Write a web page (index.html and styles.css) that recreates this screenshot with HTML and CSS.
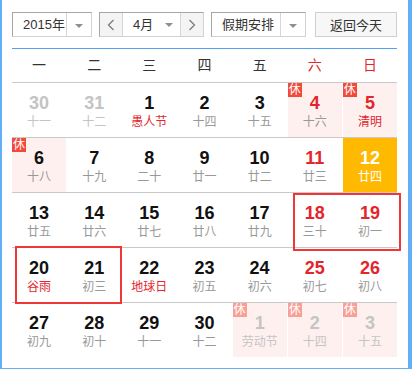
FILE: index.html
```html
<!DOCTYPE html>
<html lang="zh-CN">
<head>
  <meta charset="UTF-8">
  <meta name="viewport" content="width=device-width, initial-scale=1.0">
  <title>万年历</title>
  <link rel="stylesheet" href="styles.css">
</head>
<body>
  <div class="calendar">
    <div class="toolbar">
      <div class="select year">
        <span class="select-text">2015年</span>
        <span class="select-arrow"><i class="caret"></i></span>
      </div>
      <div class="select month">
        <span class="step"><svg width="8" height="12" viewBox="0 0 8 12"><polyline points="6.5,1 1.5,6 6.5,11" fill="none" stroke="#777" stroke-width="1.2"/></svg></span>
        <span class="select-text">4月<i class="caret"></i></span>
        <span class="step"><svg width="8" height="12" viewBox="0 0 8 12"><polyline points="1.5,1 6.5,6 1.5,11" fill="none" stroke="#777" stroke-width="1.2"/></svg></span>
      </div>
      <div class="select holiday">
        <span class="select-text">假期安排</span>
        <span class="select-arrow"><i class="caret"></i></span>
      </div>
      <button class="today-btn">返回今天</button>
    </div>

    <div class="weekdays">
      <span>一</span><span>二</span><span>三</span><span>四</span><span>五</span>
      <span class="red">六</span><span class="red">日</span>
    </div>

    <div class="week">
      <div class="day other"><b>30</b><em>十一</em></div>
      <div class="day other"><b>31</b><em>十二</em></div>
      <div class="day"><b>1</b><em class="fest">愚人节</em></div>
      <div class="day"><b>2</b><em>十四</em></div>
      <div class="day"><b>3</b><em>十五</em></div>
      <div class="day rest weekend"><i class="tag">休</i><b>4</b><em>十六</em></div>
      <div class="day rest weekend"><i class="tag">休</i><b>5</b><em class="fest">清明</em></div>
    </div>
    <div class="week">
      <div class="day rest"><i class="tag">休</i><b>6</b><em>十八</em></div>
      <div class="day"><b>7</b><em>十九</em></div>
      <div class="day"><b>8</b><em>二十</em></div>
      <div class="day"><b>9</b><em>廿一</em></div>
      <div class="day"><b>10</b><em>廿二</em></div>
      <div class="day weekend"><b>11</b><em>廿三</em></div>
      <div class="day today"><b>12</b><em>廿四</em></div>
    </div>
    <div class="week">
      <div class="day"><b>13</b><em>廿五</em></div>
      <div class="day"><b>14</b><em>廿六</em></div>
      <div class="day"><b>15</b><em>廿七</em></div>
      <div class="day"><b>16</b><em>廿八</em></div>
      <div class="day"><b>17</b><em>廿九</em></div>
      <div class="day weekend"><b>18</b><em>三十</em></div>
      <div class="day weekend"><b>19</b><em>初一</em></div>
    </div>
    <div class="week">
      <div class="day"><b>20</b><em class="fest">谷雨</em></div>
      <div class="day"><b>21</b><em>初三</em></div>
      <div class="day"><b>22</b><em class="fest">地球日</em></div>
      <div class="day"><b>23</b><em>初五</em></div>
      <div class="day"><b>24</b><em>初六</em></div>
      <div class="day weekend"><b>25</b><em>初七</em></div>
      <div class="day weekend"><b>26</b><em>初八</em></div>
    </div>
    <div class="week">
      <div class="day"><b>27</b><em>初九</em></div>
      <div class="day"><b>28</b><em>初十</em></div>
      <div class="day"><b>29</b><em>十一</em></div>
      <div class="day"><b>30</b><em>十二</em></div>
      <div class="day rest other"><i class="tag">休</i><b>1</b><em>劳动节</em></div>
      <div class="day rest other"><i class="tag">休</i><b>2</b><em>十四</em></div>
      <div class="day rest other"><i class="tag">休</i><b>3</b><em>十五</em></div>
    </div>

    <div class="pick pick-a"></div>
    <div class="pick pick-b"></div>
  </div>
</body>
</html>
```

FILE: styles.css
```css
body {
  margin: 0;
  font-family: "Liberation Sans", "Noto Sans CJK SC", sans-serif;
  color: #333;
}
.calendar {
  position: relative;
  box-sizing: border-box;
  width: 412px;
  height: 369px;
  padding: 12px 11px 0 10px;
  border-left: 2px solid #62aef7;
  border-right: 4px solid #62aef7;
  border-bottom: 1px solid #62aef7;
  background: #fff;
}
.toolbar {
  display: flex;
  gap: 7px;
  height: 25px;
  padding-bottom: 11px;
  border-bottom: 1px solid #4fa3f1;
}
.select {
  display: flex;
  box-sizing: border-box;
  height: 25px;
  border: 1px solid;
  border-color: #a6a6a6 #d2d2d2 #d2d2d2 #a6a6a6;
  font-size: 13px;
  line-height: 23px;
  background: #fff;
}
.select-text {
  position: relative;
  flex: 1;
  padding-left: 10px;
}
.select-arrow {
  width: 24px;
  border-left: 1px solid #d6d6d6;
  text-align: center;
}
.caret {
  display: inline-block;
  width: 0;
  height: 0;
  vertical-align: middle;
  border-left: 4px solid transparent;
  border-right: 4px solid transparent;
  border-top: 4px solid #8f8f8f;
}
.year { width: 80px; }
.holiday { width: 95px; }
.month { width: 105px; }
.month .select-text .caret {
  position: absolute;
  right: 7px;
  top: 10px;
}
.step {
  display: flex;
  align-items: center;
  justify-content: center;
  width: 22px;
  background: #f4f4f4;
}
.step:first-child { border-right: 1px solid #d6d6d6; }
.step:last-child { border-left: 1px solid #d6d6d6; }
.today-btn {
  margin-left: auto;
  width: 82px;
  height: 25px;
  padding: 0;
  border: 1px solid #cfcfcf;
  background: #f7f7f7;
  color: #333;
  font-family: "Liberation Sans", "Noto Sans CJK SC", sans-serif;
  font-size: 13px;
}
.weekdays {
  display: grid;
  grid-template-columns: repeat(7, 1fr);
  column-gap: 1px;
  height: 33px;
  font-size: 14px;
  line-height: 33px;
  text-align: center;
}
.red { color: #e3262b; }
.week {
  display: grid;
  grid-template-columns: repeat(7, 1fr);
  column-gap: 1px;
  border-top: 1px solid #c9c9c9;
}
.week:last-of-type { border-top-color: #c9c9c9; }
.day {
  position: relative;
  height: 54px;
  padding-top: 10px;
  box-sizing: border-box;
  text-align: center;
}
.day b {
  display: block;
  font-size: 18px;
  line-height: 20px;
  color: #111;
}
.day em {
  display: block;
  margin-top: 1px;
  font-style: normal;
  font-size: 12px;
  line-height: 16px;
  color: #999;
}
.day em.fest { color: #e3262b; }
.weekend b { color: #e3262b; }
.rest { background: #fff0f0; }
.tag {
  position: absolute;
  left: 0;
  top: 0;
  width: 14px;
  height: 14px;
  background: #f3493b;
  color: #fff;
  font-style: normal;
  font-size: 12px;
  line-height: 14px;
  text-align: center;
}
.other b,
.other em { color: #c4c4c4; }
.other .tag { background: #f8a097; }
.other.rest em { color: #c4c4c4; }
.today { background: #ffb900; }
.today b,
.today em { color: #fff; }
.pick {
  position: absolute;
  box-sizing: border-box;
  height: 58px;
  border: 2px solid #f03737;
}
.pick-a {
  left: 291px;
  top: 193px;
  width: 108px;
}
.pick-b {
  left: 13px;
  top: 246px;
  width: 107px;
}
```
